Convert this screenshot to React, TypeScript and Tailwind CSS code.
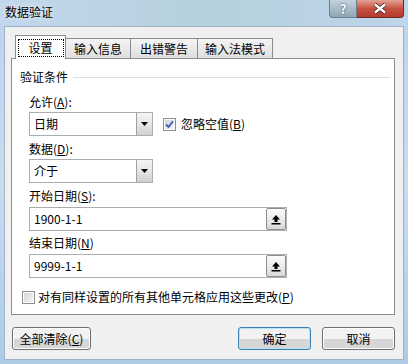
import React from 'react';

const font = "font-[family-name:'Noto_Sans_CJK_SC','Microsoft_YaHei',sans-serif]";

// Win7-style combo box with a drop-down button
function Combo({ value }: { value: string }) {
  return (
    <div className="flex h-[24px] w-[124px] border border-[#abadb3] bg-white">
      <div className="flex flex-1 items-center pl-[4px]">{value}</div>
      <div className="flex w-[16px] items-center justify-center border-l border-[#a0a0a0] bg-gradient-to-b from-[#f4f4f4] via-[#e6e6e6] to-[#cfcfcf]">
        <svg width="7" height="4" viewBox="0 0 7 4">
          <path d="M0 0h7L3.5 4z" fill="#000" />
        </svg>
      </div>
    </div>
  );
}

// Text box with the "collapse dialog" range button
function RangeBox({ value }: { value: string }) {
  return (
    <div className="flex h-[24px] w-[258px] items-center border border-[#abadb3] bg-white pl-[4px]">
      <span className="flex-1">{value}</span>
      <div className="flex h-[22px] w-[20px] items-center justify-center rounded-[2px] border border-[#8e8f8f] bg-gradient-to-b from-[#fbfbfb] via-[#ececec] to-[#d8d8d8]">
        <svg width="10" height="11" viewBox="0 0 10 11">
          <path d="M5 1L9 5.5H6.5V8H3.5V5.5H1z" fill="#000" />
          <rect x="0.5" y="9" width="9" height="1.5" fill="#000" />
        </svg>
      </div>
    </div>
  );
}

function CheckBox({ checked }: { checked?: boolean }) {
  return (
    <div className="flex h-[13px] w-[13px] items-center justify-center border border-[#8f8f8f] bg-white">
      <div className="flex h-[9px] w-[9px] items-center justify-center bg-gradient-to-br from-[#d2d4d8] to-[#f6f6f6]">
        {checked && (
          <svg width="9" height="9" viewBox="0 0 9 9">
            <path d="M1 4.5L3.5 7L8 1.2" fill="none" stroke="#3b5cad" strokeWidth="1.8" />
          </svg>
        )}
      </div>
    </div>
  );
}

function Button({ label, primary, width }: { label: React.ReactNode; primary?: boolean; width: string }) {
  return (
    <div
      className={`flex h-[23px] ${width} items-center justify-center rounded-[3px] border ${
        primary ? 'border-[#3c7fb1] shadow-[inset_0_0_0_1px_#b6e3f8]' : 'border-[#707070] shadow-[inset_0_0_0_1px_#fcfcfc]'
      } bg-gradient-to-b from-[#f2f2f2] from-50% to-[#d6d6d6] to-50%`}
    >
      {label}
    </div>
  );
}

const App = () => {
  return (
    <div className={`${font} h-[364px] w-[408px] overflow-hidden bg-gradient-to-b from-[#bcd3ea] via-[#c9dcee] to-[#aecbe6] text-[12px] leading-[16px] text-black`}>
      {/* Title bar */}
      <div className="flex h-[26px] items-start justify-between bg-gradient-to-r from-[#c2d7ec] via-[#b6d0dc] to-[#bed5ea]">
        <div className="pl-[5px] pt-[4px] text-[12px] [text-shadow:0_0_6px_#ffffff]">数据验证</div>
        <div className="mr-[4px] flex">
          <div className="flex h-[18px] w-[28px] items-center justify-center rounded-bl-[4px] border border-t-0 border-[#6d7d8a] bg-gradient-to-b from-[#c4d3dc] to-[#8ea6b4] text-[13px] font-bold leading-none text-white [text-shadow:0_0_2px_#2c3a44]">
            ?
          </div>
          <div className="flex h-[18px] w-[47px] items-center justify-center rounded-br-[4px] border border-l-0 border-t-0 border-[#6b2a22] bg-gradient-to-b from-[#e2a193] via-[#c75142] to-[#b33b2c]">
            <svg width="14" height="11" viewBox="0 0 14 11">
              <path d="M2 1.5L12 9.5M12 1.5L2 9.5" stroke="#3d1e1a" strokeWidth="4" />
              <path d="M2 1.5L12 9.5M12 1.5L2 9.5" stroke="#ffffff" strokeWidth="2.4" />
            </svg>
          </div>
        </div>
      </div>

      {/* Client area */}
      <div className="mx-[4px] h-[334px] border border-[#9db3c9] bg-[#f0f0f0] pl-[6px] pt-[8px]">
        {/* Tabs */}
        <div className="relative z-10 flex items-end pl-[4px]">
          <div className="-mb-px flex h-[24px] w-[51px] items-start justify-center border border-b-0 border-[#898c95] bg-white pt-[3px]">
            <div className="flex h-[18px] w-[46px] items-center justify-center border border-dotted border-black">设置</div>
          </div>
          <div className="flex h-[20px] w-[65px] items-center justify-center border border-b-0 border-l-0 border-[#898c95] bg-gradient-to-b from-[#f5f5f5] to-[#dfdfdf]">输入信息</div>
          <div className="flex h-[20px] w-[67px] items-center justify-center border border-b-0 border-l-0 border-[#898c95] bg-gradient-to-b from-[#f5f5f5] to-[#dfdfdf]">出错警告</div>
          <div className="flex h-[20px] w-[75px] items-center justify-center border border-b-0 border-l-0 border-[#898c95] bg-gradient-to-b from-[#f5f5f5] to-[#dfdfdf]">输入法模式</div>
        </div>

        {/* Tab panel */}
        <div className="flex h-[257px] w-[384px] flex-col border border-[#898c95] bg-white pl-[8px] pt-[10px]">
          <div className="flex items-center">
            <span>验证条件</span>
            <div className="ml-[5px] mr-[4px] h-px flex-1 bg-[#d5dfe5]" />
          </div>

          <div className="flex flex-col pl-[9px]">
            <div className="mt-[9px]">
              允许(<span className="underline">A</span>):
            </div>
            <div className="mt-[2px] flex items-center">
              <Combo value="日期" />
              <div className="ml-[10px]">
                <CheckBox checked />
              </div>
              <span className="ml-[5px]">
                忽略空值(<span className="underline">B</span>)
              </span>
            </div>

            <div className="mt-[5px]">
              数据(<span className="underline">D</span>):
            </div>
            <div className="mt-[2px]">
              <Combo value="介于" />
            </div>

            <div className="mt-[5px]">
              开始日期(<span className="underline">S</span>):
            </div>
            <div className="mt-[3px]">
              <RangeBox value="1900-1-1" />
            </div>

            <div className="mt-[4px]">
              结束日期(<span className="underline">N</span>)
            </div>
            <div className="mt-[3px]">
              <RangeBox value="9999-1-1" />
            </div>
          </div>

          <div className="mt-[11px] flex items-center pl-[2px]">
            <CheckBox />
            <span className="ml-[3px]">
              对有同样设置的所有其他单元格应用这些更改(<span className="underline">P</span>)
            </span>
          </div>
        </div>

        {/* Buttons */}
        <div className="mt-[12px] flex w-[384px] items-center pl-px">
          <Button
            width="w-[79px]"
            label={
              <span>
                全部清除(<span className="underline">C</span>)
              </span>
            }
          />
          <div className="flex-1" />
          <Button width="w-[73px]" label="确定" primary />
          <div className="w-[11px]" />
          <Button width="w-[73px]" label="取消" />
        </div>
      </div>
    </div>
  );
};

export default App;
